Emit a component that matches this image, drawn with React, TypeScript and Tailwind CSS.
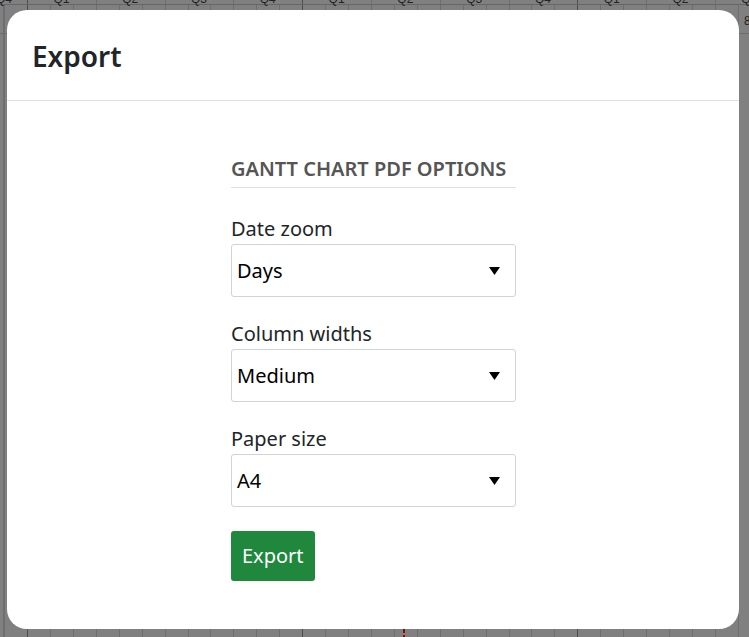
import React from 'react'

const FONT = { fontFamily: '"Segoe UI", "Noto Sans", "Open Sans", sans-serif' }

// Faded gantt grid sitting behind the modal overlay.
const GanttBackdrop: React.FC = () => {
	const start = 27
	const month = 22.93
	const months = Array.from({ length: 34 }, (_, i) => i - 1)
	const quarters = ['Q4', 'Q1', 'Q2', 'Q3', 'Q4', 'Q1', 'Q2', 'Q3', 'Q4', 'Q1', 'Q2', 'Q3']
	return (
		<svg className="absolute inset-0" width={749} height={637} viewBox="0 0 749 637">
			<rect width={749} height={637} fill="#808080" />
			{months.map((m) => {
				const x = Math.round(start + m * month) + 0.5
				const year = m % 12 === 0
				const quarter = m % 3 === 0
				return (
					<line
						key={m}
						x1={x}
						x2={x}
						y1={quarter ? 0 : 5}
						y2={637}
						stroke={year ? '#4d4d4d' : '#6e6e6e'}
						strokeWidth={1}
					/>
				)
			})}
			<line x1={0} x2={749} y1={4.5} y2={4.5} stroke="#666" />
			<line x1={0} x2={749} y1={33.5} y2={33.5} stroke="#6e6e6e" />
			<line x1={3.5} x2={3.5} y1={4} y2={637} stroke="#6e6e6e" />
			{quarters.map((q, i) => (
				<text
					key={i}
					x={i === 0 ? 4 : start + (i - 1) * month * 3 + month * 1.5}
					y={3}
					fontSize={12}
					textAnchor="middle"
					fill="#222"
					fontFamily="Liberation Sans, sans-serif"
				>
					{q}
				</text>
			))}
			<text x={744} y={25} fontSize={12} fill="#222" fontFamily="Liberation Sans, sans-serif">
				8
			</text>
			<rect x={403} y={629} width={2} height={4} fill="#8a0a0a" />
			<rect x={403} y={635} width={2} height={2} fill="#8a0a0a" />
		</svg>
	)
}

const Caret: React.FC = () => (
	<svg width="11" height="8" viewBox="0 0 11 8" className="shrink-0">
		<polygon points="0,0 11,0 5.5,8" fill="#000" />
	</svg>
)

interface SelectFieldProps {
	label: string
	value: string
}

const SelectField: React.FC<SelectFieldProps> = ({ label, value }) => (
	<div className="mb-[23px]">
		<div className="text-[20px] leading-[28px] text-[#212529]">{label}</div>
		<div className="mt-[1px] flex h-[53px] items-center justify-between rounded-[3px] border border-[#ced4da] bg-white pl-[5px] pr-[15px]">
			<span className="text-[20px] leading-[28px] text-black">{value}</span>
			<Caret />
		</div>
	</div>
)

export default function App() {
	return (
		<div className="relative h-[637px] w-[749px] overflow-hidden" style={FONT}>
			<GanttBackdrop />
			<div className="relative ml-[7px] mt-[10px] h-[619px] w-[732px] overflow-hidden rounded-[20px] bg-white">
				<div className="h-[91px] border-b border-[#dee2e6] pl-[25px] pt-[29px]">
					<h1 className="text-[28px] font-semibold leading-[34px] text-[#212529]">Export</h1>
				</div>
				<div className="pl-[224px] pt-[54px]">
					<div className="w-[285px]">
						<h2 className="mb-[27px] border-b border-[#dee2e6] pb-[4px] text-[20px] font-semibold leading-[28px] text-[#555]">
							GANTT CHART PDF OPTIONS
						</h2>
						<SelectField label="Date zoom" value="Days" />
						<SelectField label="Column widths" value="Medium" />
						<SelectField label="Paper size" value="A4" />
						<button className="mt-[1px] h-[50px] rounded-[3px] bg-[#1f883d] px-[11px] text-[20px] leading-[28px] text-white">
							Export
						</button>
					</div>
				</div>
			</div>
		</div>
	)
}
